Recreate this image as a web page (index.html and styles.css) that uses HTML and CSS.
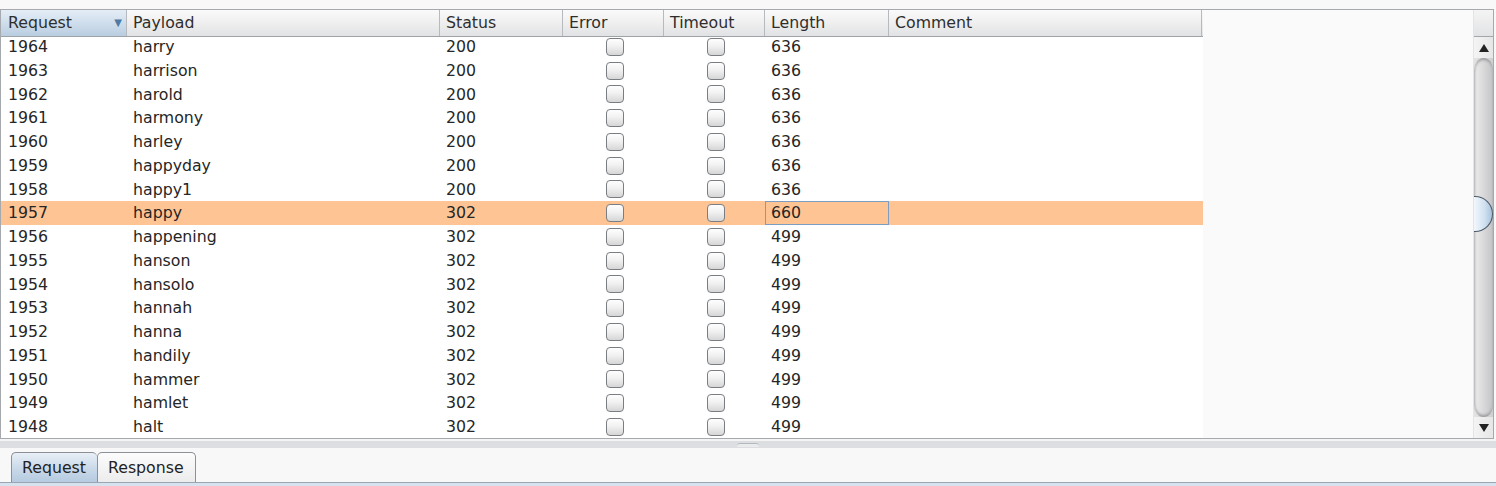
FILE: index.html
```html
<!DOCTYPE html>
<html>
<head>
<meta charset="utf-8">
<link rel="stylesheet" href="styles.css">
</head>
<body>
<div class="top-gap"></div>
<div class="table-wrap">
  <div class="viewport">
    <div class="grid">
      <div class="header">
        <div class="hcell c1 sorted"><span>Request</span><span class="sort-arrow">▼</span></div>
        <div class="hcell c2">Payload</div>
        <div class="hcell c3">Status</div>
        <div class="hcell c4">Error</div>
        <div class="hcell c5">Timeout</div>
        <div class="hcell c6">Length</div>
        <div class="hcell c7">Comment</div>
      </div>
      <div class="body">
        <div class="row"><div class="cell c1">1964</div><div class="cell c2">harry</div><div class="cell c3">200</div><div class="cell c4 chk"><span class="box"></span></div><div class="cell c5 chk"><span class="box"></span></div><div class="cell c6">636</div><div class="cell c7"></div></div>
        <div class="row"><div class="cell c1">1963</div><div class="cell c2">harrison</div><div class="cell c3">200</div><div class="cell c4 chk"><span class="box"></span></div><div class="cell c5 chk"><span class="box"></span></div><div class="cell c6">636</div><div class="cell c7"></div></div>
        <div class="row"><div class="cell c1">1962</div><div class="cell c2">harold</div><div class="cell c3">200</div><div class="cell c4 chk"><span class="box"></span></div><div class="cell c5 chk"><span class="box"></span></div><div class="cell c6">636</div><div class="cell c7"></div></div>
        <div class="row"><div class="cell c1">1961</div><div class="cell c2">harmony</div><div class="cell c3">200</div><div class="cell c4 chk"><span class="box"></span></div><div class="cell c5 chk"><span class="box"></span></div><div class="cell c6">636</div><div class="cell c7"></div></div>
        <div class="row"><div class="cell c1">1960</div><div class="cell c2">harley</div><div class="cell c3">200</div><div class="cell c4 chk"><span class="box"></span></div><div class="cell c5 chk"><span class="box"></span></div><div class="cell c6">636</div><div class="cell c7"></div></div>
        <div class="row"><div class="cell c1">1959</div><div class="cell c2">happyday</div><div class="cell c3">200</div><div class="cell c4 chk"><span class="box"></span></div><div class="cell c5 chk"><span class="box"></span></div><div class="cell c6">636</div><div class="cell c7"></div></div>
        <div class="row"><div class="cell c1">1958</div><div class="cell c2">happy1</div><div class="cell c3">200</div><div class="cell c4 chk"><span class="box"></span></div><div class="cell c5 chk"><span class="box"></span></div><div class="cell c6">636</div><div class="cell c7"></div></div>
        <div class="row selected"><div class="cell c1">1957</div><div class="cell c2">happy</div><div class="cell c3">302</div><div class="cell c4 chk"><span class="box"></span></div><div class="cell c5 chk"><span class="box"></span></div><div class="cell c6 focus">660</div><div class="cell c7"></div></div>
        <div class="row"><div class="cell c1">1956</div><div class="cell c2">happening</div><div class="cell c3">302</div><div class="cell c4 chk"><span class="box"></span></div><div class="cell c5 chk"><span class="box"></span></div><div class="cell c6">499</div><div class="cell c7"></div></div>
        <div class="row"><div class="cell c1">1955</div><div class="cell c2">hanson</div><div class="cell c3">302</div><div class="cell c4 chk"><span class="box"></span></div><div class="cell c5 chk"><span class="box"></span></div><div class="cell c6">499</div><div class="cell c7"></div></div>
        <div class="row"><div class="cell c1">1954</div><div class="cell c2">hansolo</div><div class="cell c3">302</div><div class="cell c4 chk"><span class="box"></span></div><div class="cell c5 chk"><span class="box"></span></div><div class="cell c6">499</div><div class="cell c7"></div></div>
        <div class="row"><div class="cell c1">1953</div><div class="cell c2">hannah</div><div class="cell c3">302</div><div class="cell c4 chk"><span class="box"></span></div><div class="cell c5 chk"><span class="box"></span></div><div class="cell c6">499</div><div class="cell c7"></div></div>
        <div class="row"><div class="cell c1">1952</div><div class="cell c2">hanna</div><div class="cell c3">302</div><div class="cell c4 chk"><span class="box"></span></div><div class="cell c5 chk"><span class="box"></span></div><div class="cell c6">499</div><div class="cell c7"></div></div>
        <div class="row"><div class="cell c1">1951</div><div class="cell c2">handily</div><div class="cell c3">302</div><div class="cell c4 chk"><span class="box"></span></div><div class="cell c5 chk"><span class="box"></span></div><div class="cell c6">499</div><div class="cell c7"></div></div>
        <div class="row"><div class="cell c1">1950</div><div class="cell c2">hammer</div><div class="cell c3">302</div><div class="cell c4 chk"><span class="box"></span></div><div class="cell c5 chk"><span class="box"></span></div><div class="cell c6">499</div><div class="cell c7"></div></div>
        <div class="row"><div class="cell c1">1949</div><div class="cell c2">hamlet</div><div class="cell c3">302</div><div class="cell c4 chk"><span class="box"></span></div><div class="cell c5 chk"><span class="box"></span></div><div class="cell c6">499</div><div class="cell c7"></div></div>
        <div class="row"><div class="cell c1">1948</div><div class="cell c2">halt</div><div class="cell c3">302</div><div class="cell c4 chk"><span class="box"></span></div><div class="cell c5 chk"><span class="box"></span></div><div class="cell c6">499</div><div class="cell c7"></div></div>
      </div>
    </div>
  </div>
  <div class="scrollbar">
    <div class="corner"></div>
    <div class="arrow up"><svg width="10" height="8" viewBox="0 0 10 8"><path d="M5 0 L10 8 L0 8 Z" fill="#222"/></svg></div>
    <div class="track">
      <div class="thumb"><div class="knob"></div></div>
    </div>
    <div class="arrow down"><svg width="10" height="8" viewBox="0 0 10 8"><path d="M0 0 L10 0 L5 8 Z" fill="#222"/></svg></div>
  </div>
</div>
<div class="divider"><div class="grip"></div></div>
<div class="tabs">
  <div class="tab active">Request</div>
  <div class="tab">Response</div>
</div>
<div class="tab-base"></div>
</body>
</html>
```

FILE: styles.css
```css
html, body {
  margin: 0;
  padding: 0;
}
body {
  background: #f8f8f8;
  font-family: "DejaVu Sans", "Liberation Sans", sans-serif;
  font-size: 15.75px;
  color: #262626;
  width: 1496px;
  height: 486px;
  overflow: hidden;
}
.top-gap {
  height: 9px;
}
.table-wrap {
  display: flex;
  width: 1492px;
  border: 1px solid #a6aaaf;
  height: 428px;
  background: #fafafa;
}
.viewport {
  flex: 1;
  overflow: hidden;
}
.grid {
  width: 1202px;
}
.header {
  display: flex;
  position: relative;
  z-index: 1;
  height: 27px;
  border-bottom: 1px solid #9ea3a8;
  box-sizing: border-box;
  background: linear-gradient(#fafafa, #f0f0f0 45%, #e1e2e4);
}
.hcell {
  box-sizing: border-box;
  border-right: 1px solid #b6b9bd;
  padding-left: 6px;
  line-height: 25px;
  color: #2e2e2e;
  white-space: nowrap;
}
.hcell.sorted {
  display: flex;
  justify-content: space-between;
  padding-left: 7px;
  padding-right: 4px;
  background: linear-gradient(#e4edf6, #cfdeec 50%, #b9cde0);
}
.sort-arrow {
  font-size: 10px;
  color: #4f7aa6;
  line-height: 25px;
}
.c1 { width: 126px; }
.c2 { width: 313px; }
.c3 { width: 123px; }
.c4 { width: 101px; }
.c5 { width: 101px; }
.c6 { width: 124px; }
.c7 { width: 313px; }
.body {
  background: #fff;
  margin-top: -2px;
}
.row {
  display: flex;
  height: 23.75px;
  background: #fff;
}
.row.selected {
  background: #ffc493;
}
.cell {
  box-sizing: border-box;
  padding-left: 6px;
  line-height: 23.75px;
  white-space: nowrap;
}
.cell.c1 {
  padding-left: 7px;
}
.cell.focus {
  border: 1px solid #7c9dc2;
  padding-left: 5px;
  line-height: 21.75px;
}
.chk {
  display: flex;
  align-items: center;
  justify-content: center;
  padding-left: 0;
}
.box {
  display: block;
  flex: none;
  width: 18px;
  height: 18px;
  box-sizing: border-box;
  border: 1px solid #7a7d82;
  border-radius: 4px;
  background: linear-gradient(#fefefe, #f1f1f1 45%, #d6d6d7);
  margin-left: 2px;
}
.scrollbar {
  width: 19px;
  display: flex;
  flex-direction: column;
  border-left: 1px solid #e4e4e4;
}
.corner {
  height: 27px;
  box-sizing: border-box;
  border-bottom: 1px solid #a3a7ab;
  background: linear-gradient(#f4f4f4, #e2e3e5);
}
.arrow {
  height: 21px;
  display: flex;
  align-items: center;
  justify-content: center;
  background: linear-gradient(90deg, #f4f4f4, #e6e6e6);
}
.track {
  flex: 1;
  display: flex;
  background: linear-gradient(90deg, #e3e3e3, #cfcfcf);
}
.thumb {
  flex: 1;
  position: relative;
  border-radius: 9px 9px 9px 9px / 12px 12px 12px 12px;
  background: linear-gradient(90deg, #ebebeb, #d4d4d6 60%, #c3c4c7);
  border-left: 1px solid #bfc1c4;
  box-shadow: inset 0 3px 3px -1px #9a9b9e, inset 0 -3px 3px -1px #9a9b9e;
}
.knob {
  position: absolute;
  left: -1px;
  top: 138px;
  width: 19px;
  height: 36px;
  box-sizing: border-box;
  border: 1.5px solid #4c5966;
  border-left: none;
  border-radius: 0 18px 18px 0;
  background: linear-gradient(90deg, #f2f7fc, #cfe0f0 60%, #a9c3dc);
}
.divider {
  height: 9px;
  display: flex;
  justify-content: center;
  align-items: flex-start;
  border-top: 2px solid #f4f4f4;
  background: #dcdee1;
  box-sizing: border-box;
}
.grip {
  width: 22px;
  height: 3px;
  margin-top: 2px;
  border-radius: 3px 3px 0 0;
  border-top: 1px solid #b5b8bd;
  background: #eaebed;
}
.tabs {
  display: flex;
  padding-left: 11px;
  padding-top: 4px;
  height: 30px;
}
.tab {
  box-sizing: border-box;
  height: 30px;
  padding: 0 11px 0 10px;
  line-height: 30px;
  border: 1px solid #8c9097;
  border-bottom: none;
  border-radius: 5px 5px 0 0;
  background: linear-gradient(#fcfcfc, #ececec);
  color: #222;
}
.tab.active {
  background: linear-gradient(#e8eff6, #c6d7e8 60%, #b6cbe0);
  border-right: none;
}
.tab-base {
  height: 4px;
  border-top: 1px solid #9aa6b3;
  background: #d6e2ee;
}
```
